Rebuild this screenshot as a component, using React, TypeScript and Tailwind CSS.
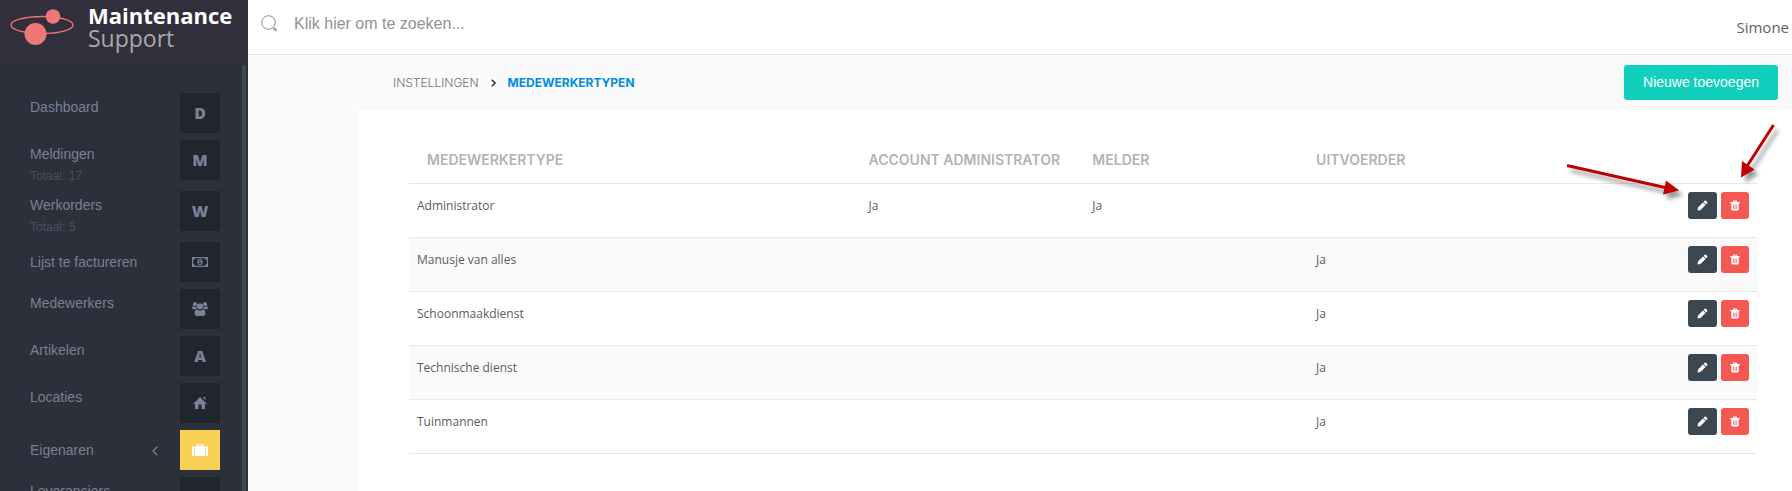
import type { ReactNode } from 'react';

interface MenuItem {
  label: string;
  tile: ReactNode;
  total?: number;
  tall?: boolean;
  active?: boolean;
  submenu?: boolean;
}

interface EmployeeType {
  name: string;
  admin?: boolean;
  reporter?: boolean;
  executor?: boolean;
}

const MoneyIcon = () => (
  <svg className="h-4 w-4" viewBox="0 0 16 16" fill="currentColor">
    <path fillRule="evenodd" d="M0 3h16v10H0zM3 4.200A2 2 0 0 1 1.200 6v4A2 2 0 0 1 3 11.800h10a2 2 0 0 1 1.800-1.800V6A2 2 0 0 1 13 4.200z" />
    <path fillRule="evenodd" d="M8 5c1.700 0 2.700 1.300 2.700 3S9.700 11 8 11s-2.700-1.300-2.700-3S6.300 5 8 5m-.5 1.200-1 .8.4.5.6-.3v2h-.8v.7h2.600v-.7h-.8V6.200z" />
  </svg>
);

const UsersIcon = () => (
  <svg className="h-4 w-4" viewBox="0 0 16 16" fill="currentColor">
    <circle cx="3" cy="3.200" r="2.100" />
    <circle cx="13" cy="3.200" r="2.100" />
    <circle cx="8" cy="5.300" r="3.100" />
    <path d="M0 7.500C0 6 .6 5.200 1.300 5.200c1 .7 2 .8 3 .4Q4.200 7.200 5 8.200H1.200Q0 8.200 0 7.500M16 7.500c0-1.500-.6-2.300-1.300-2.300-1 .7-2 .8-3 .4q.1 1.600-.7 2.600h3.800q1.200 0 1.200-.7" />
    <path d="M2.500 12.600c0-2.400.8-4 2.600-4 1.800 1.400 4 1.400 5.800 0 1.800 0 2.600 1.600 2.600 4q0 2.400-2.400 2.400H4.900q-2.400 0-2.400-2.400" />
  </svg>
);

const HomeIcon = () => (
  <svg className="h-4 w-4" viewBox="0 0 16 16" fill="currentColor">
    <path d="M8 2 1 9h2v5h3.500V9.500h3V14H13V9h2zM11 2h2.500v3.500z" />
  </svg>
);

const SuitcaseIcon = () => (
  <svg className="h-4 w-4" viewBox="0 0 16 16" fill="currentColor">
    <path d="M0 5.500Q0 4 1.500 4h.7v10h-.7Q0 14 0 12.500zM16 5.500Q16 4 14.500 4h-.7v10h.7q1.500 0 1.500-1.500z" />
    <path fillRule="evenodd" d="M2.800 4h2V2.800q0-.8.8-.8h4.800q.8 0 .8.800V4h2v10H2.800zM6 3.200V4h4v-.8z" />
  </svg>
);

const MENU: MenuItem[] = [
  { label: 'Dashboard', tile: 'D' },
  { label: 'Meldingen', tile: 'M', total: 17 },
  { label: 'Werkorders', tile: 'W', total: 5 },
  { label: 'Lijst te factureren', tile: <MoneyIcon />, tall: true },
  { label: 'Medewerkers', tile: <UsersIcon /> },
  { label: 'Artikelen', tile: 'A' },
  { label: 'Locaties', tile: <HomeIcon /> },
  { label: 'Eigenaren', tile: <SuitcaseIcon />, tall: true, active: true, submenu: true },
  { label: 'Leveranciers', tile: 'L' },
];

const TYPES: EmployeeType[] = [
  { name: 'Administrator', admin: true, reporter: true },
  { name: 'Manusje van alles', executor: true },
  { name: 'Schoonmaakdienst', executor: true },
  { name: 'Technische dienst', executor: true },
  { name: 'Tuinmannen', executor: true },
];

function Logo() {
  return (
    <a href="#" className="flex h-[65px] shrink-0 items-start gap-[13px] bg-[#302f3b] pl-[10px] pt-1">
      <svg className="mt-1 h-[38px] w-[65px] shrink-0" viewBox="0 0 65 38" fill="#ee7777">
        <ellipse cx="32" cy="17" rx="31" ry="8.500" fill="none" stroke="#ee7777" strokeWidth="1.300" />
        <circle cx="43" cy="8.500" r="7.300" />
        <circle cx="25.500" cy="26" r="11" />
      </svg>
      <span className="flex flex-col font-['Open_Sans',sans-serif] leading-[23px]">
        <span className="text-[22px] font-bold text-white">Maintenance</span>
        <span className="text-[23px] text-[#a9a9ad]">Support</span>
      </span>
    </a>
  );
}

function Sidebar() {
  return (
    <aside className="flex w-[248px] shrink-0 flex-col bg-[#2b303b]">
      <Logo />
      <div className="flex min-h-0 flex-1">
        <nav className="flex min-w-0 flex-1 flex-col gap-[7px] overflow-hidden pt-[28px] pl-[30px] pr-[22px] font-['Liberation_Sans',sans-serif] text-[14px] text-[#788195]">
          {MENU.map((item) => (
            <a key={item.label} href="#" className="flex shrink-0 items-start">
              <span className="flex flex-1 flex-col">
                <span className={item.tall ? 'leading-[40px]' : 'leading-[28px]'}>{item.label}</span>
                {item.total !== undefined && (
                  <span className="text-[12px] leading-[16px] text-[#4b4e60]">Totaal: {item.total}</span>
                )}
              </span>
              {item.submenu && (
                <svg className="mt-4 mr-[22px] h-[10px] w-[6px]" viewBox="0 0 6 10" fill="none" stroke="currentColor" strokeWidth="1.300">
                  <path d="M5.300.7 1 5l4.300 4.300" />
                </svg>
              )}
              <span
                className={`flex h-10 w-10 items-center justify-center font-['Open_Sans',sans-serif] text-[16px] font-extrabold ${
                  item.active ? 'bg-[#f8d053] text-white' : 'bg-[#21252d]'
                }`}
              >
                {item.tile}
              </span>
            </a>
          ))}
        </nav>
        <div className="mr-[2px] w-1 bg-[#3b4751]" />
      </div>
    </aside>
  );
}

function TopBar() {
  return (
    <header className="flex h-[55px] shrink-0 items-center border-b border-[#e6e6e6] bg-white pl-[13px] pr-[3px]">
      <label htmlFor="search" className="flex flex-1 items-center gap-4 pb-[7px]">
        <svg className="h-[17px] w-[17px]" viewBox="0 0 17 17" fill="none" stroke="#8b8b8b">
          <circle cx="7.500" cy="7.500" r="6.800" />
          <path d="m12.500 13 3 2.500" strokeWidth="2" />
        </svg>
        <input
          id="search"
          type="text"
          placeholder="Klik hier om te zoeken..."
          className="flex-1 font-['Liberation_Sans',sans-serif] text-[16px] text-[#626262] outline-none placeholder:text-[#929292]"
        />
      </label>
      <span className="text-[15px] text-[#626262]">Simone</span>
    </header>
  );
}

function RowActions({ name }: { name: string }) {
  return (
    <div className="flex justify-end gap-1">
      <button
        type="button"
        aria-label={`${name} bewerken`}
        className="flex h-[27px] w-[29px] items-center justify-center rounded-[3px] bg-[#3b4751] text-white"
      >
        <svg className="h-[11px] w-[11px]" viewBox="0 0 11 11" fill="currentColor">
          <path d="M.5 10.500 1 7.500l5-5L8.500 5l-5 5zM6.500 2 7.700.8q.6-.6 1.200 0l1.300 1.300q.6.600 0 1.200L9 4.500z" />
        </svg>
      </button>
      <button
        type="button"
        aria-label={`${name} verwijderen`}
        className="flex h-[27px] w-7 items-center justify-center rounded-[3px] bg-[#f55753] text-white"
      >
        <svg className="h-[11px] w-[10px]" viewBox="0 0 10 11" fill="currentColor">
          <path fillRule="evenodd" d="M.3 2h2.500l.5-1.500h3.400L7.200 2h2.500v1.200H.3zM4 2h2l-.2-.6H4.200zM1.300 3.200h7.400V9.500q0 1-1 1H2.300q-1 0-1-1zM3 4.500v4.500h.7V4.500zm1.700 0v4.500h.7V4.500zm1.700 0v4.500h.7V4.500z" />
        </svg>
      </button>
    </div>
  );
}

function TypesTable() {
  return (
    <table className="w-full table-fixed border-collapse text-left">
      <thead>
        <tr className="h-[46px] border-b border-[#e8e8e8] font-['Inter',sans-serif] text-[14px] text-[#b3b3b3] uppercase">
          <th className="w-[33.5%] pl-[18px] font-semibold">Medewerkertype</th>
          <th className="w-[16.6%] pl-2 font-semibold whitespace-nowrap">Account administrator</th>
          <th className="w-[16.6%] pl-2 font-semibold">Melder</th>
          <th className="w-[16.6%] pl-2 font-semibold">Uitvoerder</th>
          <th aria-label="Acties" />
        </tr>
      </thead>
      <tbody className="text-[12px] leading-[27px] text-[#5c5c5c]">
        {TYPES.map((type) => (
          <tr key={type.name} className="h-[54px] border-b border-[#e8e8e8] align-top even:bg-[#fafafa]">
            <td className="px-2 pt-2">{type.name}</td>
            <td className="px-2 pt-2">{type.admin && 'Ja'}</td>
            <td className="px-2 pt-2">{type.reporter && 'Ja'}</td>
            <td className="px-2 pt-2">{type.executor && 'Ja'}</td>
            <td className="px-2 pt-2">
              <RowActions name={type.name} />
            </td>
          </tr>
        ))}
      </tbody>
    </table>
  );
}

// Red pointers towards the edit and delete buttons of the first row
function Pointers() {
  return (
    <svg
      className="pointer-events-none absolute top-[120px] right-0 h-[90px] w-[232px] drop-shadow-[4px_5px_2px_rgba(0,0,0,0.4)]"
      viewBox="0 0 232 90"
      fill="#c00000"
      stroke="#c00000"
    >
      <path d="m7 45.500 98 22" strokeWidth="3" />
      <path d="m119 70.500-16 4 3-14z" stroke="none" />
      <path d="m213.500 5-27 42" strokeWidth="3" />
      <path d="m181 57.500 1-16.500 12.500 8.500z" stroke="none" />
    </svg>
  );
}

export default function App() {
  return (
    <div className="relative flex h-screen overflow-hidden bg-[#fafafa] font-['Open_Sans',sans-serif]">
      <Sidebar />
      <div className="flex min-w-0 flex-1 flex-col">
        <TopBar />
        <div className="flex h-[55px] shrink-0 items-center justify-between pr-[14px] pl-[145px]">
          <nav className="flex items-center font-['Inter',sans-serif] text-[12px] uppercase">
            <a href="#" className="font-light text-[#6f7176]">Instellingen</a>
            <svg className="mx-3 h-2 w-[5px]" viewBox="0 0 5 8" fill="none" stroke="#3c3c3c" strokeWidth="1.600">
              <path d="m.8.8 3.200 3.200-3.200 3.200" />
            </svg>
            <a href="#" className="font-bold text-[#0090d9]">Medewerkertypen</a>
          </nav>
          <button
            type="button"
            className="h-[35px] rounded-[3px] bg-[#10cfbd] px-[19px] font-['Liberation_Sans',sans-serif] text-[14px] text-white"
          >
            Nieuwe toevoegen
          </button>
        </div>
        <main className="ml-[110px] flex-1 bg-white pt-[27px] pr-[35px] pl-[51px]">
          <TypesTable />
        </main>
      </div>
      <Pointers />
    </div>
  );
}
